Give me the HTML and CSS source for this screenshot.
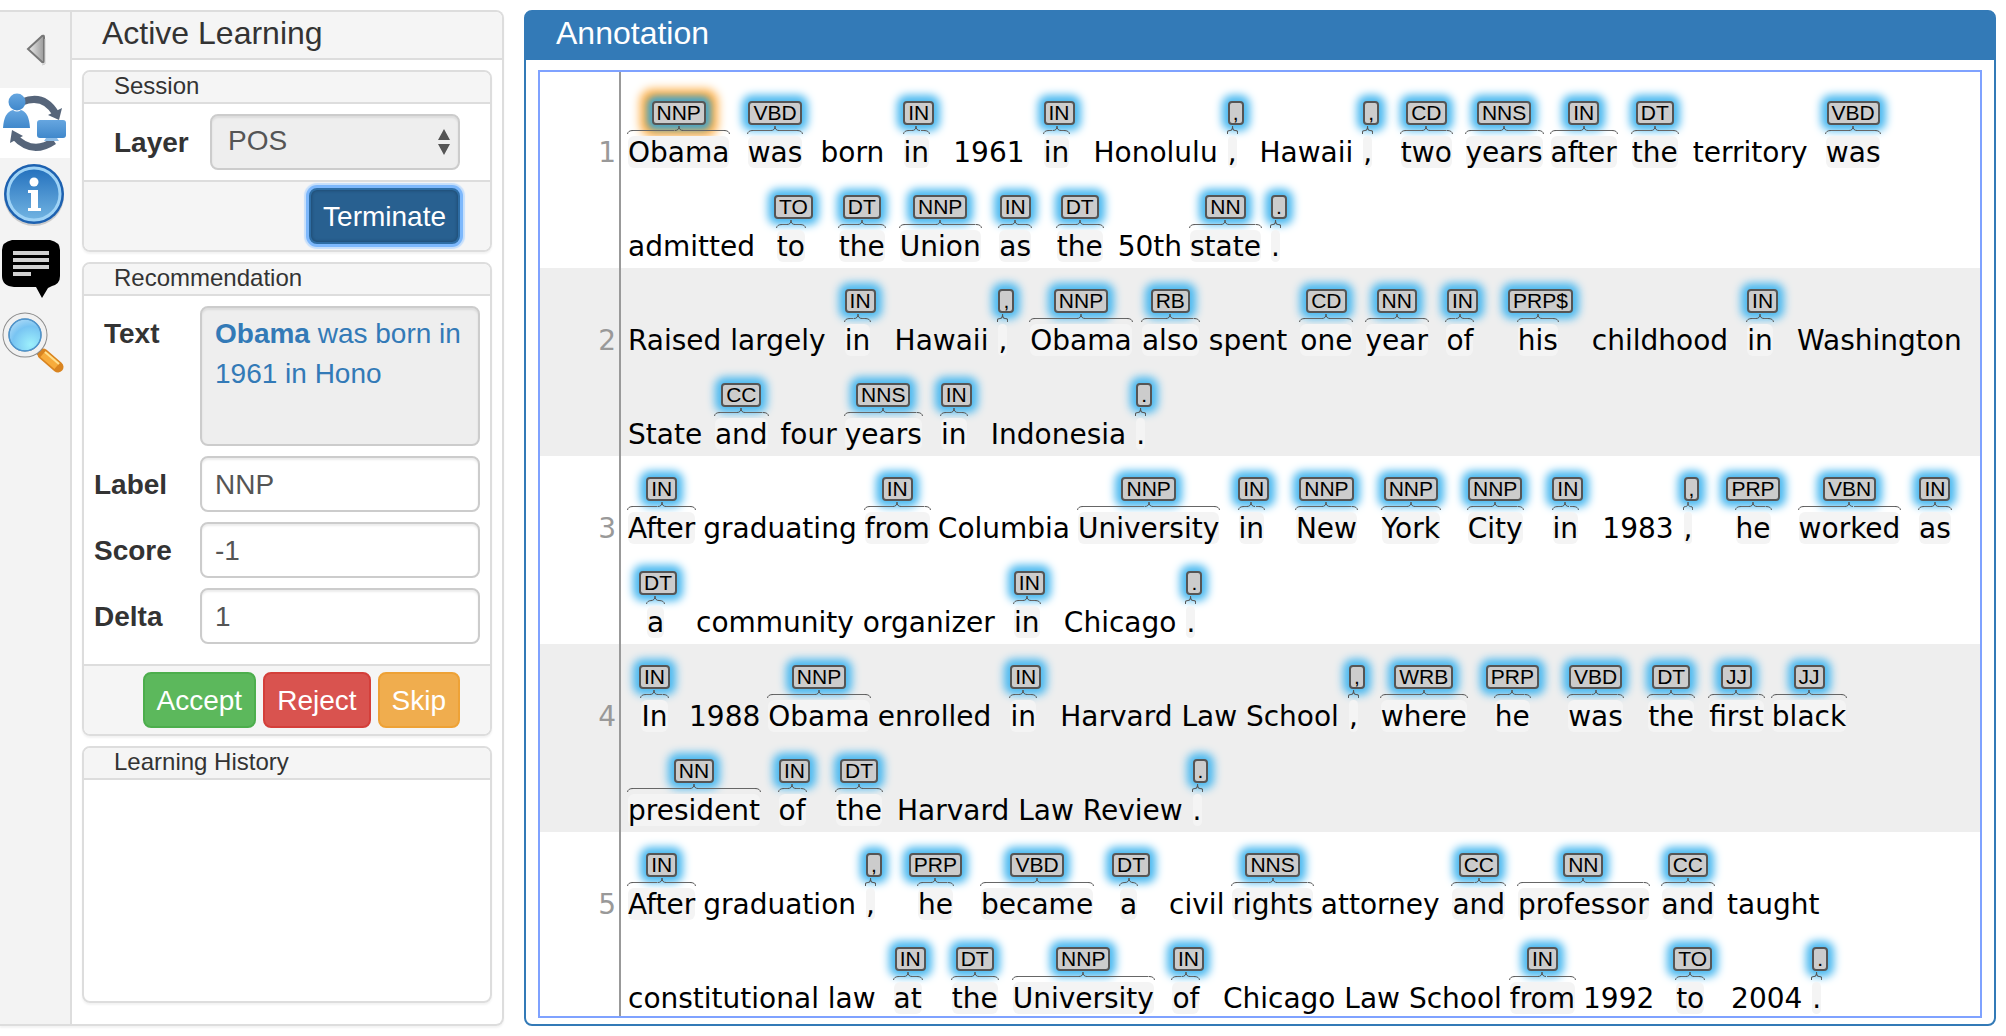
FILE: index.html
```html
<!DOCTYPE html>
<html lang="en">
<head>
<meta charset="utf-8">
<title>Active Learning – Annotation</title>
<link rel="stylesheet" href="styles.css">
</head>
<body>
<aside class="sidebar">
  <nav class="rail" aria-label="Tools">
    <button class="rail-btn collapse" aria-label="Collapse">
      <svg width="22" height="34" viewBox="0 0 22 34"><defs><linearGradient id="ga" x1="0" x2="1"><stop offset="0" stop-color="#eee"/><stop offset="1" stop-color="#9a9a9a"/></linearGradient></defs><path d="M3 16 17 3q2-1 2 1v24q0 2-2 1z" fill="url(#ga)" stroke="#777" stroke-width="2"/><path d="M20 6v25l-3 1" fill="none" stroke="#ccc" stroke-width="1"/></svg>
    </button>
    <button class="rail-btn active" aria-label="Active learning">
      <svg width="64" height="60" viewBox="0 0 64 60"><defs><linearGradient id="gb" x1="0" y1="0" x2="0" y2="1"><stop offset="0" stop-color="#66a6e0"/><stop offset="1" stop-color="#4088cb"/></linearGradient></defs><g fill="none" stroke="#56657a" stroke-width="7"><path d="M20 9q22-9 34 12"/><path d="M12 43q18 20 40 5"/></g><path d="M46 22 60 15 57 27z" fill="#56657a"/><path d="M8 50 10 37 21 43z" fill="#56657a"/><circle cx="15" cy="9" r="8.500" fill="url(#gb)"/><path d="M1 35q1-16 10-18 4 3 8 0 8 2 9 18z" fill="url(#gb)"/><rect x="35" y="27" width="29" height="18" rx="3" fill="url(#gb)"/><path d="M44 45h11l2 3H42z" fill="#8dbce6"/></svg>
    </button>
    <button class="rail-btn" aria-label="Information">
      <svg width="64" height="64" viewBox="0 0 64 64"><defs><linearGradient id="gc" x1="0" y1="0" x2="0" y2="1"><stop offset="0" stop-color="#2370bd"/><stop offset="1" stop-color="#72b4e2"/></linearGradient></defs><circle cx="32" cy="33" r="30" fill="#ccc"/><circle cx="32" cy="31" r="30" fill="#1d61b0"/><circle cx="32" cy="31" r="26" fill="url(#gc)" stroke="#9fd3f6" stroke-width="3"/><circle cx="32" cy="19" r="4.500" fill="#fff"/><path d="M26 27h10v18h3v3H26v-3h3V30h-3z" fill="#fff"/></svg>
    </button>
    <button class="rail-btn" aria-label="Comments">
      <svg width="64" height="58" viewBox="0 0 64 58"><path d="M10 0H48Q58 2 58 10V36Q58 44 50 46L46 48 40 58 34 47H12Q0 46 0 36V10Q0 2 10 0z"/><path d="M11 13H47M11 20H47M11 27H47M11 34H29" stroke="#d2d2d2" stroke-width="4"/></svg>
    </button>
    <button class="rail-btn" aria-label="Search">
      <svg width="62" height="62" viewBox="0 0 62 62"><defs><radialGradient id="gd" cx=".65" cy=".75" r=".8"><stop offset="0" stop-color="#9df0fc"/><stop offset=".6" stop-color="#78c4f2"/><stop offset="1" stop-color="#b9dff8"/></radialGradient></defs><path d="M36 38 43 45" stroke="#888" stroke-width="8"/><path d="M41 42 56 55" stroke="#d98420" stroke-width="11" stroke-linecap="round"/><path d="M41 42 55 54" stroke="#f7ac3c" stroke-width="8"/><path d="M43 40 57 52" stroke="#ffe08e" stroke-width="2"/><circle cx="23" cy="23" r="19" fill="url(#gd)" stroke="#8b8b8b" stroke-width="7"/><circle cx="23" cy="23" r="19" fill="none" stroke="#f1f1f1" stroke-width="5"/><circle cx="23" cy="23" r="16" fill="none" stroke="#4c95cf" stroke-width="1.500"/></svg>
    </button>
  </nav>
  <section class="panel">
    <h1 class="panel-title">Active Learning</h1>
    <div class="panel-body">
      <section class="card">
        <h2 class="card-title">Session</h2>
        <div class="session-body">
          <label for="layer">Layer</label>
          <select id="layer" class="control"><option>POS</option></select>
        </div>
        <div class="card-foot"><button class="btn btn-primary">Terminate</button></div>
      </section>
      <section class="card">
        <h2 class="card-title">Recommendation</h2>
        <div class="fields">
          <label class="text-label" for="rtext">Text</label>
          <output id="rtext" class="control text-box"><b>Obama</b> was born in<br>1961 in Hono</output>
          <label for="rlabel">Label</label><input id="rlabel" class="control" value="NNP">
          <label for="rscore">Score</label><input id="rscore" class="control" value="-1">
          <label for="rdelta">Delta</label><input id="rdelta" class="control" value="1">
        </div>
        <div class="card-foot">
          <button class="btn btn-success">Accept</button>
          <button class="btn btn-danger">Reject</button>
          <button class="btn btn-warning">Skip</button>
        </div>
      </section>
      <section class="card history">
        <h2 class="card-title">Learning History</h2>
      </section>
    </div>
  </section>
</aside>
<main class="annotation">
  <h1 class="panel-title">Annotation</h1>
  <div class="canvas">
    <section class="sentence"><span class="num">1</span><div class="lines">
      <p class="line"><span class="tok current"><em>NNP</em><span>Obama</span></span><span class="tok"><em>VBD</em><span>was</span></span>born<span class="tok narrow"><em>IN</em><span>in</span></span>1961<span class="tok narrow"><em>IN</em><span>in</span></span>Honolulu<span class="tok punct"><em>,</em><span>,</span></span>Hawaii<span class="tok punct"><em>,</em><span>,</span></span><span class="tok"><em>CD</em><span>two</span></span><span class="tok"><em>NNS</em><span>years</span></span><span class="tok"><em>IN</em><span>after</span></span><span class="tok"><em>DT</em><span>the</span></span>territory<span class="tok"><em>VBD</em><span>was</span></span></p>
      <p class="line">admitted<span class="tok narrow"><em>TO</em><span>to</span></span><span class="tok"><em>DT</em><span>the</span></span><span class="tok"><em>NNP</em><span>Union</span></span><span class="tok"><em>IN</em><span>as</span></span><span class="tok"><em>DT</em><span>the</span></span>50th<span class="tok"><em>NN</em><span>state</span></span><span class="tok punct"><em>.</em><span>.</span></span></p>
    </div></section>
    <section class="sentence"><span class="num">2</span><div class="lines">
      <p class="line">Raised largely<span class="tok narrow"><em>IN</em><span>in</span></span>Hawaii<span class="tok punct"><em>,</em><span>,</span></span><span class="tok"><em>NNP</em><span>Obama</span></span><span class="tok"><em>RB</em><span>also</span></span>spent<span class="tok"><em>CD</em><span>one</span></span><span class="tok"><em>NN</em><span>year</span></span><span class="tok narrow"><em>IN</em><span>of</span></span><span class="tok narrow"><em>PRP$</em><span>his</span></span>childhood<span class="tok narrow"><em>IN</em><span>in</span></span>Washington</p>
      <p class="line">State<span class="tok"><em>CC</em><span>and</span></span>four<span class="tok"><em>NNS</em><span>years</span></span><span class="tok narrow"><em>IN</em><span>in</span></span>Indonesia<span class="tok punct"><em>.</em><span>.</span></span></p>
    </div></section>
    <section class="sentence"><span class="num">3</span><div class="lines">
      <p class="line"><span class="tok"><em>IN</em><span>After</span></span>graduating<span class="tok"><em>IN</em><span>from</span></span>Columbia<span class="tok"><em>NNP</em><span>University</span></span><span class="tok narrow"><em>IN</em><span>in</span></span><span class="tok"><em>NNP</em><span>New</span></span><span class="tok"><em>NNP</em><span>York</span></span><span class="tok"><em>NNP</em><span>City</span></span><span class="tok narrow"><em>IN</em><span>in</span></span>1983<span class="tok punct"><em>,</em><span>,</span></span><span class="tok"><em>PRP</em><span>he</span></span><span class="tok"><em>VBN</em><span>worked</span></span><span class="tok"><em>IN</em><span>as</span></span></p>
      <p class="line"><span class="tok narrow"><em>DT</em><span>a</span></span>community organizer<span class="tok narrow"><em>IN</em><span>in</span></span>Chicago<span class="tok punct"><em>.</em><span>.</span></span></p>
    </div></section>
    <section class="sentence"><span class="num">4</span><div class="lines">
      <p class="line"><span class="tok"><em>IN</em><span>In</span></span>1988<span class="tok"><em>NNP</em><span>Obama</span></span>enrolled<span class="tok narrow"><em>IN</em><span>in</span></span>Harvard Law School<span class="tok punct"><em>,</em><span>,</span></span><span class="tok"><em>WRB</em><span>where</span></span><span class="tok"><em>PRP</em><span>he</span></span><span class="tok"><em>VBD</em><span>was</span></span><span class="tok"><em>DT</em><span>the</span></span><span class="tok"><em>JJ</em><span>first</span></span><span class="tok"><em>JJ</em><span>black</span></span></p>
      <p class="line"><span class="tok"><em>NN</em><span>president</span></span><span class="tok narrow"><em>IN</em><span>of</span></span><span class="tok"><em>DT</em><span>the</span></span>Harvard Law Review<span class="tok punct"><em>.</em><span>.</span></span></p>
    </div></section>
    <section class="sentence"><span class="num">5</span><div class="lines">
      <p class="line"><span class="tok"><em>IN</em><span>After</span></span>graduation<span class="tok punct"><em>,</em><span>,</span></span><span class="tok"><em>PRP</em><span>he</span></span><span class="tok"><em>VBD</em><span>became</span></span><span class="tok narrow"><em>DT</em><span>a</span></span>civil<span class="tok"><em>NNS</em><span>rights</span></span>attorney<span class="tok"><em>CC</em><span>and</span></span><span class="tok"><em>NN</em><span>professor</span></span><span class="tok"><em>CC</em><span>and</span></span>taught</p>
      <p class="line">constitutional law<span class="tok narrow"><em>IN</em><span>at</span></span><span class="tok"><em>DT</em><span>the</span></span><span class="tok"><em>NNP</em><span>University</span></span><span class="tok narrow"><em>IN</em><span>of</span></span>Chicago Law School<span class="tok"><em>IN</em><span>from</span></span>1992<span class="tok narrow"><em>TO</em><span>to</span></span>2004<span class="tok punct"><em>.</em><span>.</span></span></p>
    </div></section>
  </div>
</main>
</body>
</html>
```
FILE: styles.css
```css
* { box-sizing: border-box; }
body {
  margin: 0;
  height: 100vh;
  padding: 10px 10px 10px 0;
  display: flex;
  gap: 20px;
  background: #fff;
  color: #333;
  font-family: "Liberation Sans", Arial, sans-serif;
  font-size: 28px;
}
h1, h2, p { margin: 0; font-weight: 400; }
button, input, select { font: inherit; }

.sidebar {
  flex: 0 0 504px;
  display: flex;
  border: 2px solid #ddd;
  border-left: 0;
  border-radius: 0 8px 8px 0;
  box-shadow: 0 2px 2px rgba(0, 0, 0, .05);
}
.rail {
  flex: 0 0 72px;
  display: flex;
  flex-direction: column;
  background: #f3f3f3;
  border-right: 2px solid #ddd;
}
.rail-btn {
  height: 74px;
  padding: 0 0 0 2px;
  border: 0;
  background: none;
  display: flex;
  align-items: center;
}
.rail-btn.collapse { height: 76px; padding-left: 25px; }
.rail-btn.active { height: 70px; background: #fff; }

.panel { flex: 1; display: flex; flex-direction: column; }
.panel-title {
  height: 48px;
  padding-left: 30px;
  font-size: 32px;
  line-height: 42px;
  background: #f5f5f5;
  border-bottom: 2px solid #ddd;
  border-radius: 0 6px 0 0;
}
.panel-body {
  flex: 1;
  display: flex;
  flex-direction: column;
  gap: 10px;
  padding: 10px 10px 21px;
}
.card {
  border: 2px solid #ddd;
  border-radius: 8px;
  box-shadow: 0 2px 2px rgba(0, 0, 0, .05);
}
.card-title {
  height: 32px;
  padding-left: 30px;
  font-size: 24px;
  line-height: 28px;
  background: #f5f5f5;
  border-bottom: 2px solid #ddd;
  border-radius: 6px 6px 0 0;
}
.history { flex: 1; }
label { font-weight: 700; padding-top: 2px; }
.session-body {
  display: grid;
  grid-template-columns: 96px 1fr;
  align-items: center;
  padding: 10px 30px;
}
.control {
  width: 100%;
  height: 56px;
  padding: 2px 13px 0;
  border: 2px solid #ccc;
  border-radius: 8px;
  color: #555;
  background: #fff;
  box-shadow: inset 0 2px 2px rgba(0, 0, 0, .075);
}
select.control {
  appearance: none;
  padding: 0 16px 4px;
  background: #eee url("data:image/svg+xml,%3Csvg xmlns='http://www.w3.org/2000/svg' width='12' height='26'%3E%3Cpath d='M6 0 12 11H0zM6 26 0 15h12z' fill='%23555'/%3E%3C/svg%3E") no-repeat right 8px center;
}
.fields {
  display: grid;
  grid-template-columns: 106px 1fr;
  align-items: center;
  row-gap: 10px;
  padding: 10px 10px 20px;
}
.text-label { align-self: start; padding: 8px 0 0 10px; line-height: 40px; }
.text-box {
  height: 140px;
  padding: 6px 13px;
  line-height: 40px;
  color: #337ab7;
  background: #eee;
}
.card-foot {
  display: flex;
  justify-content: flex-end;
  gap: 7px;
  padding: 6px 30px;
  background: #f5f5f5;
  border-top: 2px solid #ddd;
  border-radius: 0 0 6px 6px;
}
.btn {
  height: 56px;
  padding: 2px 12px 0;
  border: 2px solid;
  border-radius: 8px;
  color: #fff;
}
.btn-primary {
  background: #286090;
  border-color: #2e6da4;
  box-shadow: inset 0 0 3px 1px #204d74, 0 0 0 3px #7db8fc, 0 0 1px 5px #c6dffb;
}
.btn-success { background: #5cb85c; border-color: #4cae4c; }
.btn-danger { background: #d9534f; border-color: #d43f3a; }
.btn-warning { background: #f0ad4e; border-color: #eea236; }

.annotation {
  flex: 1;
  min-width: 0;
  display: flex;
  flex-direction: column;
  border: 2px solid #337ab7;
  border-radius: 8px;
}
.annotation .panel-title {
  background: #337ab7;
  border-color: #337ab7;
  border-radius: 4px 4px 0 0;
  color: #fff;
}
.canvas {
  flex: 1;
  min-height: 0;
  margin: 10px 12px 6px;
  overflow: hidden;
  border: 2px solid #7fa2ff;
}
.sentence {
  display: grid;
  grid-template-columns: 79px 1fr;
  font-family: "DejaVu Sans", Verdana, sans-serif;
  line-height: 30px;
  color: #000;
}
.sentence:nth-child(even) { background: #eee; }
.num { padding: 58px 3px 0 0; text-align: right; color: #999; }
.lines { padding-left: 7px; border-left: 2px solid #999; }
.sentence:first-child .num { padding-top: 66px; }
.sentence:first-child .lines { padding-top: 8px; }
.line {
  height: 94px;
  padding-bottom: 6px;
  display: flex;
  align-items: flex-end;
  gap: 8px;
  white-space: nowrap;
}
.tok { display: flex; flex-direction: column; align-items: center; }
.tok em {
  height: 24px;
  margin: 0 11px 11px;
  padding: 0 3px;
  border: 2px solid #555;
  border-radius: 4px;
  background: #ccc;
  box-shadow: 0 0 9px 6px #4bb9f0;
  font: 21px/20px "Liberation Sans", Arial, sans-serif;
}
.tok.current em { box-shadow: 0 0 6px 5px #4aa5c4, 0 0 10px 12px #fdb04a; }
.tok span {
  position: relative;
  padding-top: 2px;
  border-radius: 6px;
  background: #f4f4f4;
}
.tok.narrow span { margin-right: 5px; }
.tok.punct { align-items: flex-start; padding-left: 2px; }
.tok.punct em { margin: 0 8px 11px 0; }
/* curly brace joining a tag to its word */
.tok span::before {
  content: "";
  position: absolute;
  left: -1px;
  right: -1px;
  top: -10px;
  height: 8px;
  background:
    url("data:image/svg+xml,%3Csvg xmlns='http://www.w3.org/2000/svg' width='6' height='8'%3E%3Cpath d='M.5 8Q1 4.500 6 4.500' fill='none' stroke='%23555'/%3E%3C/svg%3E") no-repeat left top,
    url("data:image/svg+xml,%3Csvg xmlns='http://www.w3.org/2000/svg' width='6' height='8'%3E%3Cpath d='M5.500 8Q5 4.500 0 4.500' fill='none' stroke='%23555'/%3E%3C/svg%3E") no-repeat right top,
    url("data:image/svg+xml,%3Csvg xmlns='http://www.w3.org/2000/svg' width='8' height='8'%3E%3Cpath d='M0 4.500Q4 4.500 4 0Q4 4.500 8 4.500' fill='none' stroke='%23555'/%3E%3C/svg%3E") no-repeat center top,
    linear-gradient(#666, #666) 6px 4px / calc(50% - 10px) 1px no-repeat,
    linear-gradient(#666, #666) right 6px top 4px / calc(50% - 10px) 1px no-repeat;
}
.tok.punct span::before {
  background: url("data:image/svg+xml,%3Csvg xmlns='http://www.w3.org/2000/svg' width='11' height='8'%3E%3Cpath d='M.5 8V6Q.5 4.500 3 4.500 5.500 4.500 5.500 0 5.500 4.500 8 4.500 10.500 4.500 10.500 6V8' fill='none' stroke='%23555'/%3E%3C/svg%3E") no-repeat left top;
}
```
